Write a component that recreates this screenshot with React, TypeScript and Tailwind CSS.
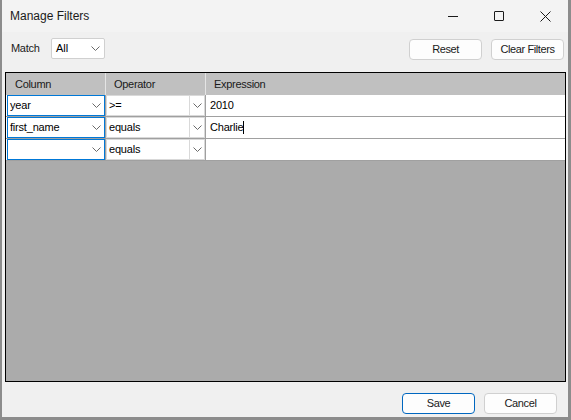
import { ReactNode } from 'react';

const Chevron = ({ className = '' }: { className?: string }) => (
  <svg width="9" height="5" viewBox="0 0 9 5" className={className}>
    <path d="M0.5 0.5 L4.5 4.5 L8.5 0.5" fill="none" stroke="#6a6a6a" strokeWidth="1" />
  </svg>
);

const Btn = ({ children, primary = false, w }: { children: ReactNode; primary?: boolean; w: string }) => (
  <div
    className={`${w} h-[21px] rounded-[4px] border bg-[#fdfdfd] flex items-center justify-center text-[11px] tracking-[-0.4px] text-[#1a1a1a] ${
      primary ? 'border-[#0067c0]' : 'border-[#d0d0d0]'
    }`}
  >
    {children}
  </div>
);

// first column: focused-looking combo with blue frame
const ColumnCombo = ({ value }: { value: string }) => (
  <div className="ml-px w-[98px] h-[21px] border border-[#0078d7] bg-white flex items-center">
    <span className="flex-1 pl-[2px] text-[11px] tracking-[-0.2px] text-black">{value}</span>
    <Chevron className="mr-[3px]" />
  </div>
);

const OperatorCombo = ({ value }: { value: string }) => (
  <div className="w-[99px] h-[21px] border border-[#d9d9d9] bg-white flex items-stretch">
    <span className="flex-1 pl-[2px] flex items-center text-[11px] tracking-[-0.2px] text-black">{value}</span>
    <div className="w-[15px] border-l border-[#d9d9d9] flex items-center justify-center">
      <Chevron />
    </div>
  </div>
);

const rows = [
  { col: 'year', op: '>=', expr: '2010', cursor: false },
  { col: 'first_name', op: 'equals', expr: 'Charlie', cursor: true },
  { col: '', op: 'equals', expr: '', cursor: false },
];

export default function App() {
  return (
    <div className="w-[571px] h-[420px] bg-[#f0f0f0] border-l-2 border-r-[3px] border-b-[3px] border-[#8c8c8c] flex flex-col font-['Liberation_Sans',Arial,sans-serif]">
      {/* title bar */}
      <div className="h-[32px] flex items-center bg-[#f3f3f3]">
        <span className="pl-[8px] text-[12px] text-[#1a1a1a]">Manage Filters</span>
        <div className="ml-auto flex h-full">
          <div className="w-[46px] flex items-center justify-center">
            <div className="w-[10px] h-px bg-[#1a1a1a]" />
          </div>
          <div className="w-[46px] flex items-center justify-center">
            <div className="w-[10px] h-[10px] border border-[#1a1a1a] rounded-[1px]" />
          </div>
          <div className="w-[46px] flex items-center justify-center">
            <svg width="11" height="11" viewBox="0 0 11 11">
              <path d="M0.5 0.5 L10.5 10.5 M10.5 0.5 L0.5 10.5" stroke="#1a1a1a" strokeWidth="1" />
            </svg>
          </div>
        </div>
      </div>

      {/* toolbar */}
      <div className="mt-[6px] h-[21px] flex items-center">
        <span className="ml-[9px] w-[40px] text-[11px] tracking-[-0.3px] text-[#1a1a1a]">Match</span>
        <div className="w-[54px] h-[21px] border border-[#d0d0d0] rounded-[2px] bg-white flex items-center">
          <span className="flex-1 pl-[4px] text-[11px] text-black">All</span>
          <Chevron className="mr-[4px]" />
        </div>
        <div className="ml-auto mr-[4px] flex gap-[9px] mt-[2px]">
          <Btn w="w-[73px]">Reset</Btn>
          <Btn w="w-[73px]">Clear Filters</Btn>
        </div>
      </div>

      {/* grid */}
      <div className="mt-[13px] ml-[3px] mr-[2px] h-[310px] border border-black bg-[#ababab] flex flex-col">
        <div className="h-[22px] bg-[#c0c0c0] flex text-[11px] tracking-[-0.3px] text-[#1a1a1a]">
          <div className="w-[100px] border-r border-[#e4e4e4] flex items-center pl-[9px]">Column</div>
          <div className="w-[100px] border-r border-[#e4e4e4] flex items-center pl-[8px]">Operator</div>
          <div className="flex-1 flex items-center pl-[8px]">Expression</div>
        </div>
        {rows.map((r, i) => (
          <div key={i} className="h-[22px] bg-white border-b border-[#a0a0a0] flex">
            <div className="w-[100px] border-r border-[#a0a0a0] flex items-start">
              <ColumnCombo value={r.col} />
            </div>
            <div className="w-[100px] border-r border-[#a0a0a0] flex items-start">
              <OperatorCombo value={r.op} />
            </div>
            <div className="flex-1 flex items-center pl-[4px] text-[11px] tracking-[-0.2px] text-black">
              {r.expr}
              {r.cursor && <span className="w-px h-[13px] bg-black" />}
            </div>
          </div>
        ))}
      </div>

      {/* footer */}
      <div className="mt-[11px] h-[21px] flex justify-end mr-[11px] gap-[9px]">
        <Btn w="w-[73px]" primary>
          Save
        </Btn>
        <Btn w="w-[73px]">Cancel</Btn>
      </div>
    </div>
  );
}
